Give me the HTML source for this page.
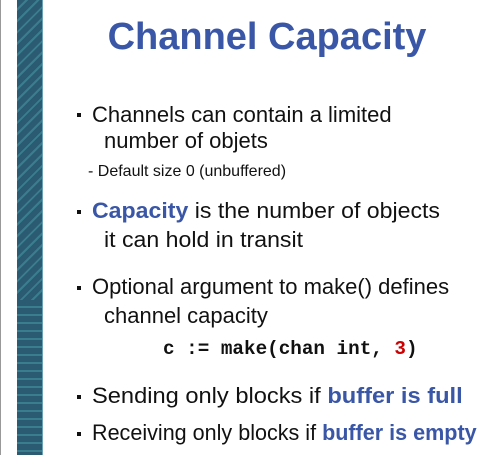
<!DOCTYPE html>
<html><head><style>
body{margin:0;width:480px;height:455px;background:#fff;position:relative;overflow:hidden;font-family:"Liberation Sans",Arial,sans-serif;color:#111}
.l{position:absolute;white-space:nowrap;line-height:1;transform-origin:0 0}
.t{font-size:22px}
.b{color:#3a56a6;font-weight:bold}
.sq{position:absolute;width:4px;height:4px;background:#111}
</style></head><body>
<div style="position:absolute;left:0;top:0;width:1px;height:455px;background:#999"></div>
<div style="position:absolute;left:17px;top:0;width:26px;height:455px;background:repeating-linear-gradient(135deg,#2b5b72 0 6px,#3a7d8e 6px 8px)"></div>
<div style="position:absolute;left:17px;top:300px;width:26px;height:155px;background:repeating-linear-gradient(180deg,#2b5b72 0 6px,#3a7d8e 6px 8px)"></div>
<div style="position:absolute;left:42px;top:0;width:1px;height:455px;background:#6aa2b4"></div>

<div class="l b" style="font-size:38px;left:107px;top:18px;width:320px;text-align:center">Channel Capacity</div>

<div class="sq" style="left:77px;top:113px"></div>
<div class="l t" style="left:92px;top:104px">Channels can contain a limited</div>
<div class="l t" style="left:104px;top:130px">number of objets</div>
<div class="l" style="font-size:16px;left:88px;top:164px">- Default size 0 (unbuffered)</div>

<div class="sq" style="left:77px;top:210px"></div>
<div class="l t" style="left:92px;top:200px;transform:scaleX(1.05)"><span class="b">Capacity</span> is the number of objects</div>
<div class="l t" style="left:104px;top:229px;transform:scaleX(1.05)">it can hold in transit</div>

<div class="sq" style="left:77px;top:286px"></div>
<div class="l t" style="left:92px;top:276px">Optional argument to make() defines</div>
<div class="l t" style="left:104px;top:305px">channel capacity</div>

<div class="l" style="font-family:'Liberation Mono',monospace;font-weight:bold;font-size:19.3px;left:163px;top:340px">c := make(chan int, <span style="color:#c00">3</span>)</div>

<div class="sq" style="left:77px;top:395px"></div>
<div class="l t" style="left:92px;top:385px;transform:scaleX(1.075)">Sending only blocks if <span class="b">buffer is full</span></div>
<div class="sq" style="left:77px;top:432px"></div>
<div class="l t" style="left:92px;top:422px;transform:scaleX(0.98)">Receiving only blocks if <span class="b">buffer is empty</span></div>
</body></html>
